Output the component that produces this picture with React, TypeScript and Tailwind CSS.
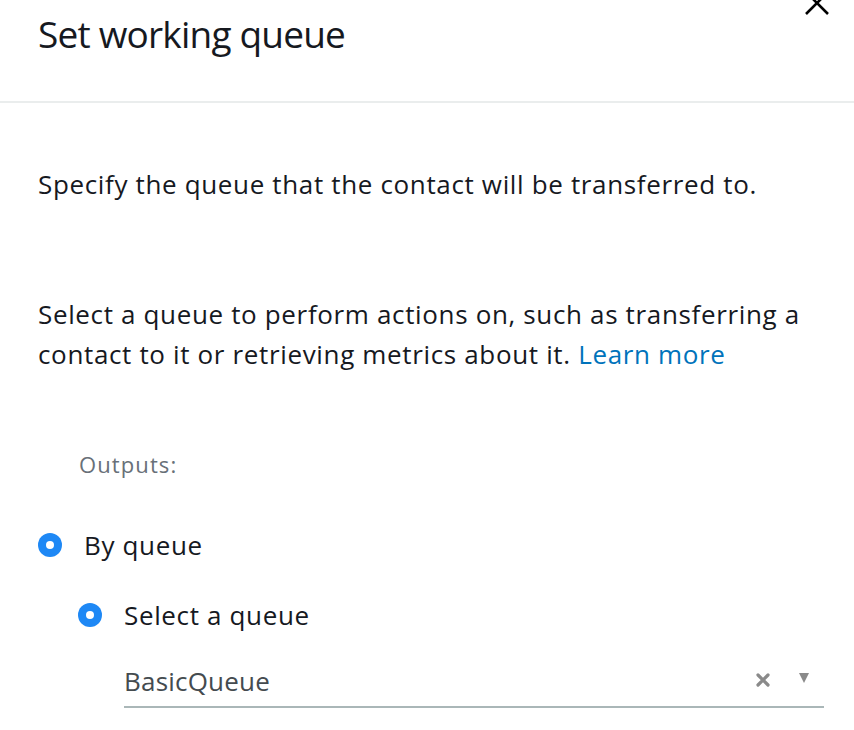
import React from "react";

const font = { fontFamily: '"Open Sans", "Noto Sans", Arial, sans-serif' };

function Radio() {
  return (
    <span className="inline-flex h-6 w-6 shrink-0 items-center justify-center rounded-full bg-[#1e88f5]">
      <span className="h-2 w-2 rounded-full bg-white" />
    </span>
  );
}

export default function App() {
  return (
    <div className="relative h-[730px] w-[854px] overflow-hidden bg-white text-[#16191f]" style={font}>
      {/* close button, partly cut off at the top */}
      <button className="absolute right-[24px] top-[-10px] text-black" aria-label="Close">
        <svg width="26" height="26" viewBox="0 0 26 26" fill="none" stroke="currentColor" strokeWidth="2.6">
          <path d="M2 2 L24 24 M24 2 L2 24" />
        </svg>
      </button>

      <header className="h-[103px] border-b-2 border-[#eaeded] px-[38px] pt-[10px]">
        <h1 className="text-[37px] leading-[48px] tracking-[-0.8px] text-[#16191f]">Set working queue</h1>
      </header>

      <div className="pl-[38px] pr-[30px] text-[26px] tracking-[0.65px]">
        <p className="mt-[63px] leading-[36px]">Specify the queue that the contact will be transferred to.</p>

        <p className="mt-[92px] leading-[40px]">
          Select a queue to perform actions on, such as transferring a
          <br />
          contact to it or retrieving metrics about it.{" "}
          <a className="text-[#0073bb]" href="#">
            Learn more
          </a>
        </p>

        <div className="mt-[75px] pl-[41px] text-[22px] leading-[30px] tracking-[1.1px] text-[#687078]">
          Outputs:
        </div>

        <div className="mt-[49px] flex items-center gap-[22px]">
          <Radio />
          <span className="leading-[34px]">By queue</span>
        </div>

        <div className="mt-[36px] flex items-center gap-[22px] pl-[40px]">
          <Radio />
          <span className="leading-[34px]">Select a queue</span>
        </div>

        <div className="ml-[86px] mt-[26px] flex h-[50px] items-center border-b-2 border-[#aab7b8] pb-[2px]">
          <span className="flex-1 tracking-[0.2px] text-[#444b4f]">BasicQueue</span>
          <svg width="14" height="14" viewBox="0 0 14 14" className="mr-[28px] mb-[2px]">
            <path d="M2 2 L12 12 M12 2 L2 12" stroke="#8a8a8a" strokeWidth="3.2" strokeLinecap="round" />
          </svg>
          <svg width="12" height="12" viewBox="0 0 12 12" className="mr-[14px] mb-[6px]">
            <path d="M1 1 H11 L6 11 Z" fill="#8a8a8a" />
          </svg>
        </div>
      </div>
    </div>
  );
}
